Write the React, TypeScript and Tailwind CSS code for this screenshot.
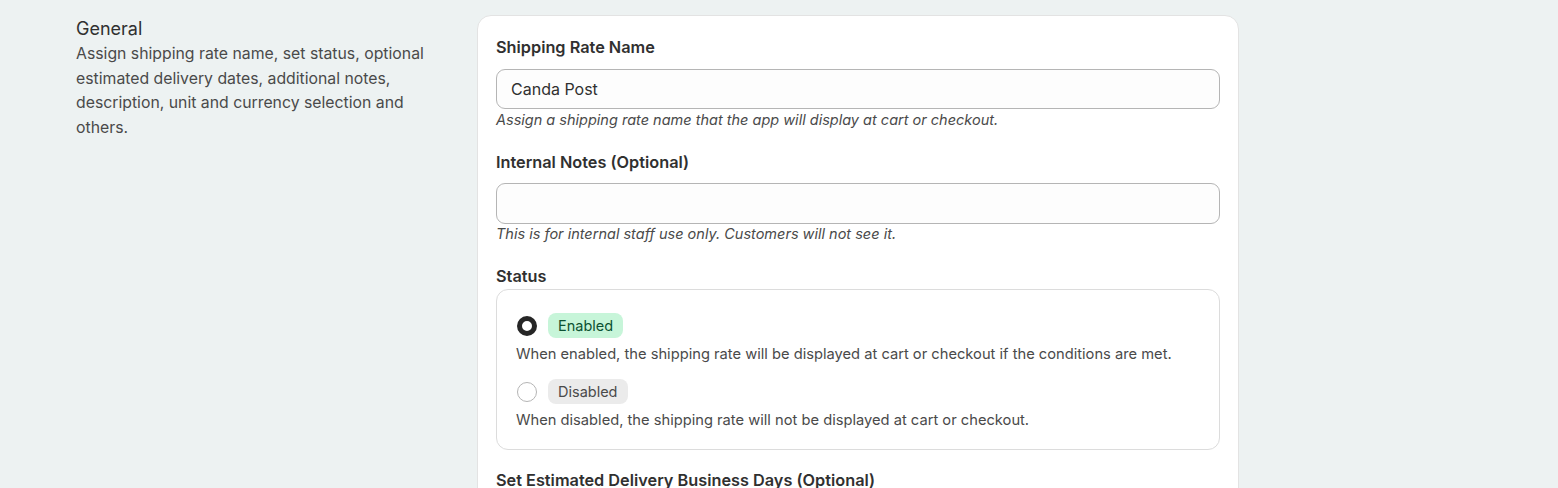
export default function App() {
  return (
    <div className="min-h-screen bg-[#edf2f2] font-['Inter',sans-serif] text-[#303030] overflow-hidden h-[488px]">
      <div className="flex pl-[76px] pt-[15px]">
        <div className="w-[402px] shrink-0 pt-[2px] pr-[40px]">
          <h2 className="text-[18px] leading-[24px] text-[#303030]">General</h2>
          <p className="mt-[1px] text-[15.8px] leading-[24.5px] text-[#4a4a4a]">
            Assign shipping rate name, set status, optional estimated delivery dates, additional notes, description, unit
            and currency selection and others.
          </p>
        </div>

        <div className="-ml-px w-[762px] shrink-0 rounded-t-[14px] border border-[#e3e3e3] bg-white px-[18px] pt-[21px] pb-10">
          <label className="block text-[16.3px] font-semibold leading-5">Shipping Rate Name</label>
          <input
            className="mt-3 block h-[40px] w-full rounded-[9px] border border-[#b5b5b5] bg-[#fdfdfd] px-[14px] text-[16px] outline-none"
            defaultValue="Canda Post"
          />
          <p className="mt-px text-[14.5px] italic leading-5 text-[#4a4a4a]">
            Assign a shipping rate name that the app will display at cart or checkout.
          </p>

          <label className="mt-[22px] block text-[16.3px] font-semibold leading-5">Internal Notes (Optional)</label>
          <input
            className="mt-[11px] block h-[41px] w-full rounded-[9px] border border-[#b5b5b5] bg-[#fdfdfd] px-[14px] text-[16px] outline-none"
            defaultValue=""
          />
          <p className="mt-0 text-[14.5px] italic leading-5 text-[#4a4a4a]">
            This is for internal staff use only. Customers will not see it.
          </p>

          <label className="mt-[22px] block text-[16.3px] font-semibold leading-5">Status</label>
          <div className="mt-[3px] rounded-[12px] border border-[#dcdcdc] px-[19px] pt-[23px] pb-[19px]">
            <div className="flex items-center gap-[11px]">
              <span className="ml-px h-5 w-5 rounded-full border-[5px] border-[#262626] bg-white" />
              <span className="rounded-[8px] bg-[#c7f5d9] px-[10px] text-[14.5px] leading-[25px] text-[#0c5132]">
                Enabled
              </span>
            </div>
            <p className="mt-[6px] text-[14.7px] leading-5 text-[#4a4a4a]">
              When enabled, the shipping rate will be displayed at cart or checkout if the conditions are met.
            </p>
            <div className="mt-[15px] flex items-center gap-[11px]">
              <span className="ml-px h-5 w-5 rounded-full border border-[#b5b5b5] bg-white" />
              <span className="rounded-[8px] bg-[#ebebeb] px-[10px] text-[14.5px] leading-[25px] text-[#4a4a4a]">
                Disabled
              </span>
            </div>
            <p className="mt-[6px] text-[14.7px] leading-5 text-[#4a4a4a]">
              When disabled, the shipping rate will not be displayed at cart or checkout.
            </p>
          </div>

          <label className="mt-[20px] block text-[16.3px] font-semibold leading-5">
            Set Estimated Delivery Business Days (Optional)
          </label>
        </div>
      </div>
    </div>
  );
}
